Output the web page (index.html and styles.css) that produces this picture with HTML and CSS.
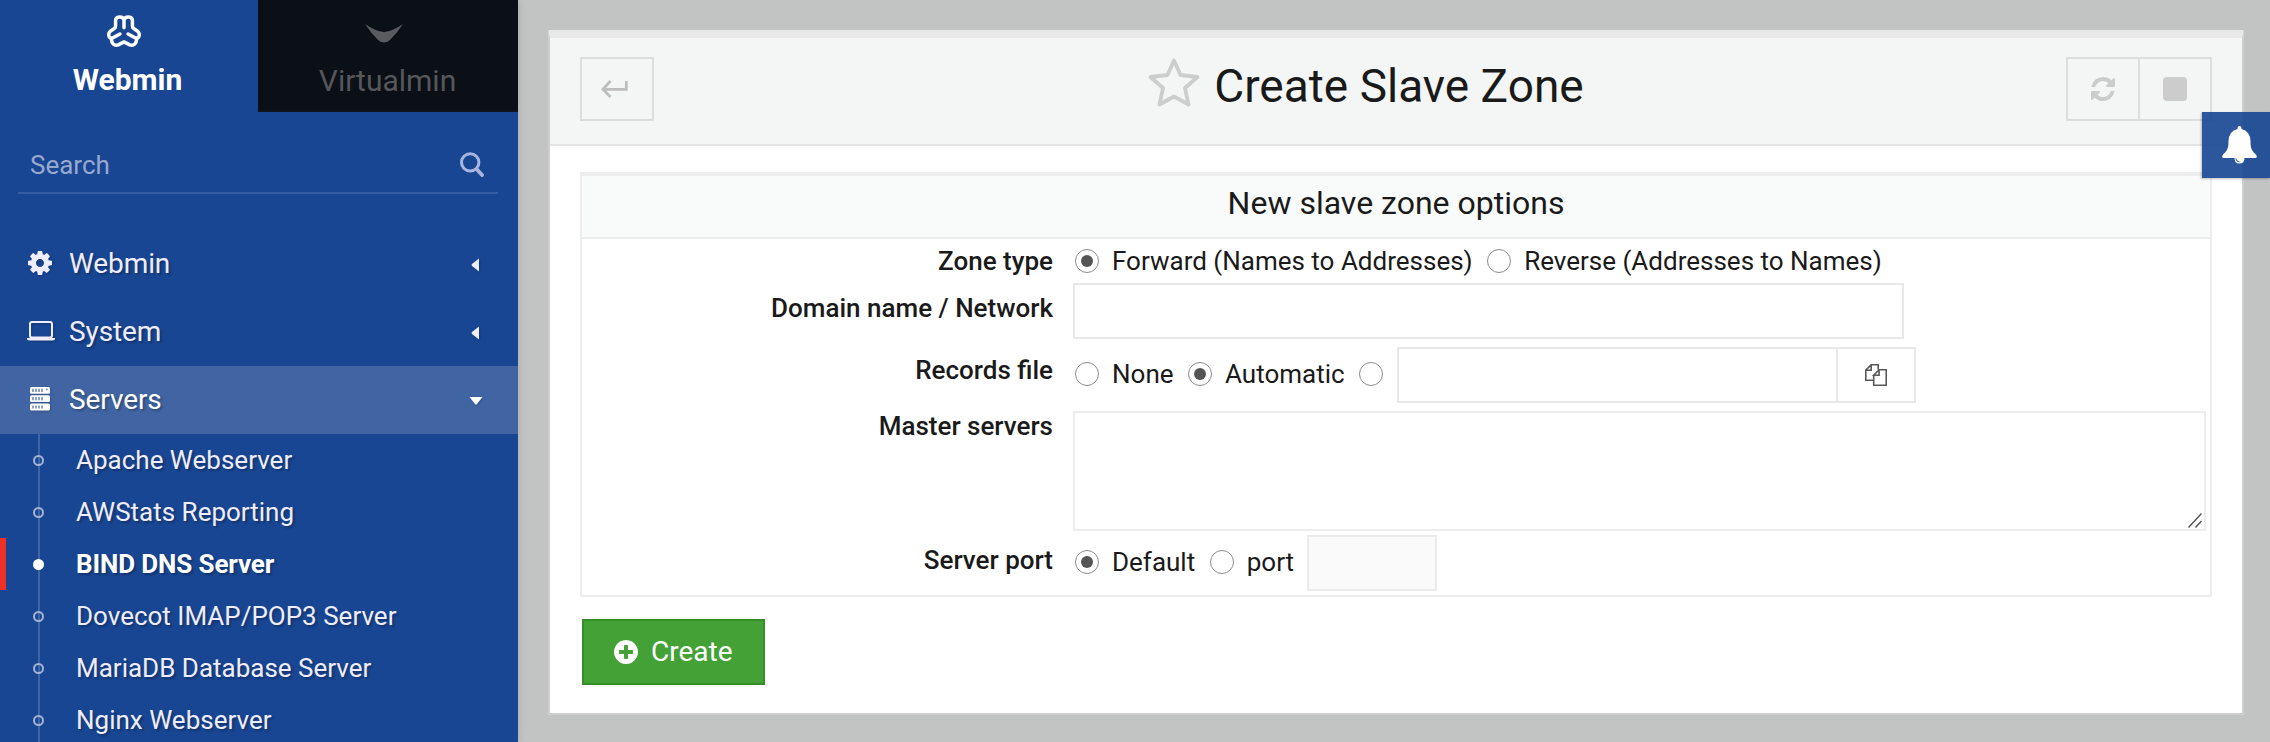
FILE: index.html
```html
<!DOCTYPE html>
<html lang="en">
<head>
<meta charset="utf-8">
<title>Create Slave Zone</title>
<link rel="stylesheet" href="styles.css">
</head>
<body>
<div class="app">
  <aside class="sidebar">
    <div class="tabs">
      <div class="tab tab-active">
        <svg class="logo-webmin" viewBox="0 0 103 96" fill="none" stroke="#fff" stroke-width="10.500" stroke-linecap="round" stroke-linejoin="round"><path d="M51.500 38V14C48 2 26 2 26 17V33Q26 39 20 42L11 48C2 54 4 68 14 71C12 85 22 94 34 90L51.500 81L69 90C81 94 91 85 89 71C99 68 101 54 92 48L83 42Q77 39 77 33V17C77 2 55 2 51.500 14M14 71L39 57M89 71L64 57"/></svg>
        <span class="tab-name">Webmin</span>
      </div>
      <div class="tab tab-dim">
        <svg class="logo-virtualmin" viewBox="0 0 38 19"><path d="M0 0Q10 7 19 8Q28 7 38 0Q32 9 25 16Q19 21 13 16Q6 9 0 0Z" fill="#595b5f"/></svg>
        <span class="tab-name">Virtualmin</span>
      </div>
    </div>
    <div class="search">
      <span class="search-text">Search</span>
      <svg class="search-icon" viewBox="0 0 24 25" fill="none" stroke="#a9b5de" stroke-linecap="round"><circle cx="10.200" cy="10.400" r="8.700" stroke-width="3"/><path d="M17 17.500L22 23" stroke-width="3.800"/></svg>
    </div>
    <nav class="menu">
      <div class="menu-row">
        <svg class="ico-gear" viewBox="0 128 1536 1536" fill="#efedfc"><path d="M1024 896q0-106-75-181t-181-75-181 75-75 181 75 181 181 75 181-75 75-181zm512-109v222q0 12-8 23t-20 13l-185 28q-19 54-39 91 35 50 107 138 10 12 10 25t-9 23q-27 37-99 108t-94 71q-12 0-26-9l-138-108q-44 23-91 38-16 136-29 186-7 28-36 28h-222q-14 0-24.500-8.500t-11.500-21.500l-28-184q-49-16-90-37l-141 107q-10 9-25 9-14 0-25-11-126-114-165-168-7-10-7-23 0-12 8-23 15-21 51-66.500t54-70.500q-27-50-41-99l-183-27q-13-2-21-12.500t-8-23.500v-222q0-12 8-23t19-13l186-28q14-46 39-92-40-57-107-138-10-12-10-24 0-10 9-23 26-36 98.500-107.500t94.500-71.500q13 0 26 10l138 107q44-23 91-38 16-136 29-186 7-28 36-28h222q14 0 24.500 8.500t11.500 21.500l28 184q49 16 90 37l142-107q9-9 24-9 13 0 25 10 129 119 165 170 7 8 7 22 0 12-8 23-15 21-51 66.500t-54 70.500q26 50 41 98l183 28q13 2 21 12.500t8 23.500z"/></svg>
        <span class="menu-name">Webmin</span>
        <svg class="caret-left" viewBox="0 0 8 14"><path d="M8 0.500V13.500L1 8Q0 7 1 6Z" fill="#efedfc"/></svg>
      </div>
      <div class="menu-row">
        <svg class="ico-laptop" viewBox="0 0 28 20"><rect x="3" y="1" width="22" height="15.500" rx="2" fill="none" stroke="#efedfc" stroke-width="2"/><path d="M0 17H28V18.500Q27 19.500 25 19.500H3Q1 19.500 0 18.500Z" fill="#efedfc"/></svg>
        <span class="menu-name">System</span>
        <svg class="caret-left" viewBox="0 0 8 14"><path d="M8 0.500V13.500L1 8Q0 7 1 6Z" fill="#efedfc"/></svg>
      </div>
      <div class="menu-row menu-open">
        <svg class="ico-servers" viewBox="0 0 20 24"><g fill="#fff"><rect width="20" height="6.800" rx="1.500"/><rect y="8.300" width="20" height="6.800" rx="1.500"/><rect y="16.600" width="20" height="6.800" rx="1.500"/></g><path d="M3 1.800v3.200M6 1.800v3.200M9 1.800v3.200M12 1.800v3.200M17 1.800v1.500M3 10.100v3.200M6 10.100v3.200M9 10.100v3.200M12 10.100v3.200M3 18.400v3.200M6 18.400v3.200M9 18.400v3.200M12 18.400v3.200" stroke="#4165a3" stroke-width="1.200"/></svg>
        <span class="menu-name">Servers</span>
        <svg class="caret-down" viewBox="0 0 14 8"><path d="M0.500 0H13.500L8 7Q7 8 6 7Z" fill="#fff"/></svg>
      </div>
    </nav>
    <ul class="submenu">
      <li>Apache Webserver</li>
      <li>AWStats Reporting</li>
      <li class="current">BIND DNS Server</li>
      <li>Dovecot IMAP/POP3 Server</li>
      <li>MariaDB Database Server</li>
      <li>Nginx Webserver</li>
    </ul>
  </aside>
  <main class="main">
    <section class="panel">
      <header class="panel-head">
        <button class="btn back">
          <svg class="ico-back" viewBox="0 0 27 18" fill="none" stroke="#bdbdbd" stroke-width="2.800"><path d="M25.300 1V9.300H2M9.500 1L2 9.300L9.500 17"/></svg>
        </button>
        <h1 class="title">
          <svg class="star" viewBox="0 0 52 50"><path d="M26 3.500L32.500 18L49.500 20L37 31L40.500 47.500L26 39.500L11.500 47.500L15 31L2.500 20L19.500 18Z" fill="none" stroke="#cdcdcd" stroke-width="3.800" stroke-linejoin="round"/></svg>
          <span>Create Slave Zone</span>
        </h1>
        <div class="btn-group">
          <button class="btn"><svg class="ico-24" viewBox="128 128 1536 1536" fill="#ccc"><path d="M1639 1056q0 5-1 7-64 268-268 434.500t-478 166.500q-146 0-282.500-55t-243.500-157l-129 129q-19 19-45 19t-45-19-19-45v-448q0-26 19-45t45-19h448q26 0 45 19t19 45-19 45l-137 137q71 66 161 102t187 36q134 0 250-65t186-179q11-17 53-117 8-23 30-23h192q13 0 22.500 9.500t9.500 22.500zm25-800v448q0 26-19 45t-45 19h-448q-26 0-45-19t-19-45 19-45l138-138q-148-137-349-137-134 0-250 65t-186 179q-11 17-53 117-8 23-30 23h-199q-13 0-22.500-9.500t-9.500-22.500v-7q65-268 270-434.500t480-166.500q146 0 284 55.500t245 156.500l130-129q19-19 45-19t45 19 19 45z"/></svg></button>
          <button class="btn"><svg class="ico-24" viewBox="0 0 24 24"><rect width="24" height="24" rx="4" fill="#ccc"/></svg></button>
        </div>
      </header>
      <div class="panel-body">
        <form class="box">
          <h2 class="box-title">New slave zone options</h2>
          <div class="row row-type">
            <label class="label">Zone type</label>
            <div class="field">
              <i class="radio on"></i><span class="opt">Forward (Names to Addresses)</span>
              <i class="radio"></i><span class="opt">Reverse (Addresses to Names)</span>
            </div>
          </div>
          <div class="row row-domain">
            <label class="label">Domain name / Network</label>
            <div class="field"><div class="input input-domain"></div></div>
          </div>
          <div class="row row-records">
            <label class="label">Records file</label>
            <div class="field">
              <i class="radio"></i><span class="opt">None</span>
              <i class="radio on"></i><span class="opt">Automatic</span>
              <i class="radio radio-file"></i>
              <div class="input input-file"></div>
              <div class="input input-pick"><svg class="ico-files" viewBox="0 0 22 22" fill="none" stroke="#5a5a5a" stroke-width="1.600"><path d="M8.500 16.300H0.800V6.200L6.200 0.800H13.200V5.500M6.200 0.800V6.200H0.800M8.700 11.200V21.200H21.200V5.800H14.100L8.700 11.200H14.100V5.800"/></svg></div>
            </div>
          </div>
          <div class="row row-master">
            <label class="label">Master servers</label>
            <div class="field"><div class="input textarea"><svg class="grip" viewBox="0 0 14 15" stroke="#555" stroke-width="1.500"><path d="M0.500 14.500L13.500 0.500M7.500 14.500L13.500 8"/></svg></div></div>
          </div>
          <div class="row row-port">
            <label class="label">Server port</label>
            <div class="field">
              <i class="radio on"></i><span class="opt">Default</span>
              <i class="radio"></i><span class="opt opt-port">port</span>
              <div class="input input-port"></div>
            </div>
          </div>
        </form>
        <button class="create">
          <svg class="ico-24" viewBox="128 128 1536 1536" fill="#fff"><path d="M1344 960v-128q0-26-19-45t-45-19h-256v-256q0-26-19-45t-45-19h-128q-26 0-45 19t-19 45v256h-256q-26 0-45 19t-19 45v128q0 26 19 45t45 19h256v256q0 26 19 45t45 19h128q26 0 45-19t19-45v-256h256q26 0 45-19t19-45zm320-64q0 209-103 385.500t-279.500 279.500-385.500 103-385.500-103-279.500-279.500-103-385.500 103-385.500 279.500-279.500 385.500-103 385.500 103 279.500 279.500 103 385.500z"/></svg>
          <span>Create</span>
        </button>
      </div>
    </section>
  </main>
  <div class="bell">
    <svg class="ico-bell" viewBox="0 0 35 38"><path d="M17.500 0Q19.500 0 19.500 3Q28 5 28.500 15C28.500 23 30 25 34 28.500Q36 32 33 32H22.500Q22.500 37.500 17.500 37.500Q12.500 37.500 12.500 32H2Q-1 32 1 28.500C5 25 6.500 23 6.500 15Q7 5 15.500 3Q15.500 0 17.500 0Z" fill="#fff"/><path d="M13.800 32.500Q14.200 35.800 17.500 36" fill="none" stroke="#28549b" stroke-width="1"/></svg>
  </div>
</div>
</body>
</html>
```
FILE: styles.css
```css
*, *::before, *::after { box-sizing: border-box; }
body { margin: 0; font-family: Roboto, "Liberation Sans", sans-serif; font-size: 26px; color: #1a1a1a; }
svg { display: block; flex: none; }
button { font: inherit; padding: 0; margin: 0; border-radius: 0; }

.app { position: relative; display: flex; width: 2270px; height: 742px; overflow: hidden; background: #c2c4c3; }

.sidebar { flex: none; width: 518px; height: 742px; background: #184693; color: #efedfc; box-shadow: 0 0 8px rgba(0, 0, 0, .14); }
.tabs { display: flex; height: 112px; }
.tab { display: flex; flex-direction: column; align-items: center; width: 258px; height: 112px; font-size: 30px; line-height: 36px; }
.tab-active { color: #fff; font-weight: 700; padding: 15px 3px 0 0; }
.tab-active .tab-name { margin-top: 15px; }
.logo-webmin { width: 34px; height: 32px; margin-right: 7px; }
.tab-dim { width: 260px; padding: 24px 1px 0 0; background: #0b0f16; border-bottom: 2px solid #10151c; color: #55575b; }
.tab-dim .tab-name { margin-top: 20px; }
.logo-virtualmin { width: 38px; height: 19px; margin-right: 8px; }

.search { display: flex; align-items: center; justify-content: space-between; width: 480px; height: 58px; margin: 24px 0 0 18px; padding: 0 14px 0 12px; border-bottom: 2px solid rgba(255, 255, 255, .13); color: #98a9cf; }
.search-text { padding-top: 2px; }
.search-icon { width: 24px; height: 25px; }

.menu { margin-top: 36px; }
.menu-row { display: flex; align-items: center; height: 68px; padding-left: 26px; font-size: 28px; text-shadow: 2px 2px 2px rgba(0, 0, 0, .25); }
.menu-open { background: #4165a3; color: #fff; }
.menu-row svg { filter: drop-shadow(1px 1px 1px rgba(0, 0, 0, .2)); }
.menu-name { flex: 1; padding-bottom: 2px; letter-spacing: -.1px; }
.ico-gear { width: 24px; height: 24px; margin: 0 17px 2px 2px; }
.ico-laptop { width: 28px; height: 20px; margin: 0 14px 2px 1px; }
.ico-servers { width: 20px; height: 24px; margin: 0 19px 2px 4px; }
.caret-left { width: 8px; height: 14px; margin-right: 39px; margin-top: 2px; }
.caret-down { width: 14px; height: 8px; margin-right: 35px; margin-top: 2px; }

.submenu { margin: 0; padding: 0; list-style: none; background: linear-gradient(#4165a3, #4165a3) 38px 0 / 2px 100% no-repeat; }
.submenu li { display: flex; align-items: center; height: 52px; padding-left: 33px; text-shadow: 2px 2px 2px rgba(0, 0, 0, .25); }
.submenu li::before { content: ""; width: 11px; height: 11px; margin-right: 32px; border: 2px solid #a3b3d4; border-radius: 50%; }
.submenu .current { color: #fff; font-weight: 700; letter-spacing: -.12px; padding-left: 27px; border-left: 6px solid #ee3124; }
.submenu .current::before { background: #fff; border-color: #fff; }

.main { flex: 1; padding: 30px 26px 27px 30px; }
.panel { height: 685px; border: 2px solid #cfcfcf; border-top: 8px solid #e8e8e8; border-radius: 2px; background: #fff; }
.panel-head { display: flex; justify-content: space-between; height: 108px; padding: 19px 30px 0; background: #f4f6f5; border-bottom: 2px solid #e4e5e4; }
.btn { display: flex; align-items: center; justify-content: center; width: 74px; height: 64px; background: none; border: 2px solid #ddd; }
.back { margin-right: 12px; }
.ico-back { width: 27px; height: 18px; margin-left: -5px; }
.title { display: flex; margin: 0; font-size: 46px; font-weight: 400; line-height: 58px; }
.star { width: 52px; height: 50px; margin-right: 14px; }
.btn-group { display: flex; }
.btn-group .btn + .btn { margin-left: -2px; }
.ico-24 { width: 24px; height: 24px; }

.panel-body { padding: 26px 30px 0; }
.box { height: 425px; border: 2px solid #ededed; border-top-width: 4px; }
.box-title { height: 63px; margin: 0; background: #f9fbfa; border-bottom: 2px solid #ebecec; font-size: 32px; font-weight: 400; line-height: 54px; text-align: center; }
.row { display: flex; }
.label { width: 471px; margin-right: 20px; font-weight: 500; line-height: 30px; text-align: right; }
.field { display: flex; align-items: center; flex: 1; white-space: nowrap; }
.row-type { height: 44px; }
.row-type .label { padding-top: 7px; }
.row-domain { height: 64px; }
.row-domain .label { padding-top: 10px; }
.row-records { height: 64px; }
.row-records .label { padding-top: 8px; }
.row-master { height: 124px; }
.row-port { height: 56px; }
.row-port .label { padding-top: 10px; }
.row-domain .field, .row-records .field { height: 56px; }
.row-master .field { height: 120px; }
.radio { display: flex; align-items: center; justify-content: center; flex: none; width: 24px; height: 24px; margin-left: 2px; margin-right: 13px; border: 1px solid #8c8c8c; border-radius: 50%; background: #fff; }
.radio.on::after { content: ""; width: 12px; height: 12px; border-radius: 50%; background: #555; }
.row-records .radio, .row-records .opt, .row-port .radio, .row-port .opt { margin-bottom: 2px; }
.opt { margin-right: 12.500px; }
.opt-port { margin-right: 13px; }
.input { flex: none; height: 56px; border: 2px solid #e8e8e8; background: #fff; }
.input-domain { width: 831px; }
.radio-file { margin-right: 14px; }
.input-file { width: 441px; }
.input-pick { display: flex; align-items: center; justify-content: center; width: 80px; margin-left: -2px; }
.ico-files { width: 22px; height: 22px; }
.textarea { display: flex; align-items: flex-end; justify-content: flex-end; width: 1133px; height: 120px; padding: 0 2px 1px 0; border-color: #ededed; }
.grip { width: 14px; height: 15px; }
.input-port { width: 130px; background: #fafafa; border-color: #ebebeb; }

.create { display: flex; align-items: center; width: 183px; height: 66px; margin: 22px 0 0 2px; padding-left: 30px; background: #43a135; border: 2px solid #368e2b; color: #fff; font-size: 28px; }
.create span { margin-left: 13px; padding-bottom: 2px; }

.bell { position: absolute; top: 112px; right: 0; display: flex; width: 68px; height: 66px; padding: 14px 0 0 20px; background: rgba(24, 70, 147, .91); box-shadow: -1px 1px 2px rgba(0, 0, 0, .25); }
.ico-bell { width: 35px; height: 38px; }
```
